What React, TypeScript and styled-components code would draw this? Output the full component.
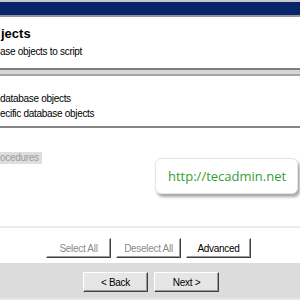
import React from 'react';
import styled, { createGlobalStyle } from 'styled-components';

const GlobalStyle = createGlobalStyle`
  html, body {
    margin: 0;
    padding: 0;
    overflow: hidden;
  }
  body {
    font-family: "Liberation Sans", Arial, sans-serif;
  }
`;

const Window = styled.div`
  width: 300px;
  height: 300px;
  display: flex;
  flex-direction: column;
  background: #fff;
  overflow: hidden;
`;

const TitleBar = styled.div`
  height: 13px;
  flex: none;
  background: #0a246a;
  border-top: 2px solid #c8c8c8;
  border-bottom: 2px solid #949494;
`;

const Header = styled.div`
  height: 51px;
  flex: none;
  background: #fff;
  display: flex;
  flex-direction: column;
  padding-top: 9px;
  box-sizing: border-box;
`;

const Title = styled.div`
  font-weight: bold;
  font-size: 13px;
  line-height: 16px;
  color: #000;
  padding-left: 1px;
`;

const Subtitle = styled.div`
  font-size: 10px;
  line-height: 13px;
  letter-spacing: -0.3px;
  color: #000;
  margin-top: 3px;
`;

const Etched = styled.div`
  height: 4px;
  flex: none;
  background: #d6d6d6;
  border-top: 2px solid #7e7e7e;
  border-bottom: 2px solid #a4a4a4;
`;

const Body = styled.div`
  position: relative;
  flex: 1;
  display: flex;
  flex-direction: column;
  padding-top: 15px;
  padding-bottom: 5px;
`;

const Option = styled.div`
  font-size: 10px;
  line-height: 15px;
  letter-spacing: -0.3px;
  color: #000;
`;

const Divider = styled.div`
  height: 2px;
  margin-top: 5px;
  background: #858585;
`;

const ObjectItem = styled.div`
  margin-top: 24px;
  align-self: flex-start;
  font-size: 10px;
  line-height: 12px;
  letter-spacing: -0.3px;
  color: #9c9c9c;
  background: #dedede;
  padding-right: 3px;
`;

const Watermark = styled.div`
  position: absolute;
  left: 155px;
  top: 82px;
  width: 143px;
  height: 36px;
  box-sizing: border-box;
  border: 1px solid #e4e4e4;
  border-radius: 6px;
  background: #fff;
  box-shadow: 2px 3px 3px rgba(0, 0, 0, 0.35);
  padding: 8px 0 0 12px;
  font-family: "Open Sans", sans-serif;
  font-size: 13px;
  line-height: 18px;
  color: #33a035;
`;

const BottomRule = styled.div`
  height: 2px;
  margin-top: auto;
  background: #ececec;
`;

const ActionRow = styled.div`
  display: flex;
  gap: 5px;
  padding-left: 46px;
  margin-top: 10px;
`;

const Button = styled.div<{ $disabled?: boolean; $face?: string }>`
  width: 65px;
  height: 20px;
  box-sizing: border-box;
  display: flex;
  align-items: center;
  justify-content: center;
  font-size: 10px;
  letter-spacing: -0.3px;
  color: ${(p) => (p.$disabled ? '#8a8a8a' : '#000')};
  background: ${(p) => p.$face || '#fff'};
  border-top: 1px solid #fff;
  border-left: 1px solid #fff;
  border-right: 1px solid #404040;
  border-bottom: 1px solid #404040;
  box-shadow: inset -1px -1px 0 #9a9a9a;
`;

const Footer = styled.div`
  height: 37px;
  flex: none;
  box-sizing: border-box;
  background: #dcdcdc;
  display: flex;
  align-items: flex-start;
  gap: 6px;
  padding: 9px 0 0 83px;
  box-shadow: inset 0 -2px 0 #e8e8e8;
`;

const App = () => {
  return (
    <>
      <GlobalStyle />
      <Window>
        <TitleBar />
        <Header>
          <Title>jects</Title>
          <Subtitle>ase objects to script</Subtitle>
        </Header>
        <Etched />
        <Body>
          <Option>database objects</Option>
          <Option>ecific database objects</Option>
          <Divider />
          <ObjectItem>ocedures</ObjectItem>
          <Watermark>http://tecadmin.net</Watermark>
          <BottomRule />
          <ActionRow>
            <Button $disabled>Select All</Button>
            <Button $disabled>Deselect All</Button>
            <Button>Advanced</Button>
          </ActionRow>
        </Body>
        <Footer>
          <Button $face="#e6e6e6">&lt; Back</Button>
          <Button $face="#e6e6e6">Next &gt;</Button>
        </Footer>
      </Window>
    </>
  );
};

export default App;
